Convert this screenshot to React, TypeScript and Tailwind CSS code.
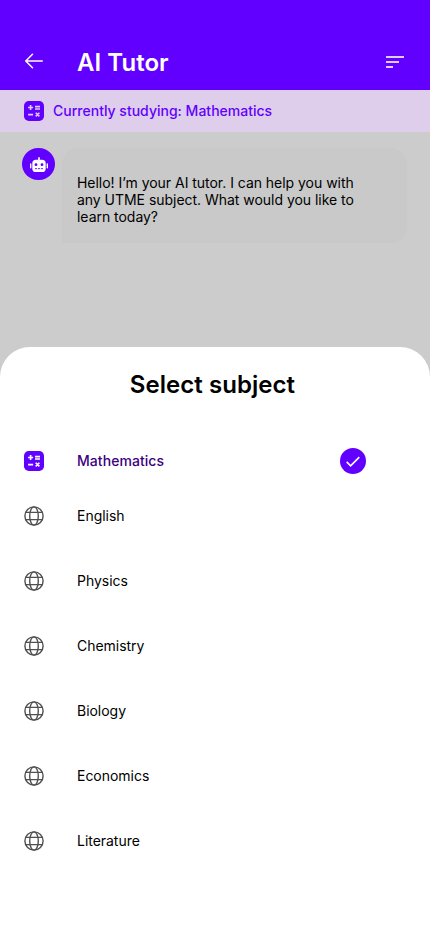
import React from "react";
import { PiArrowLeft } from "react-icons/pi";

const subjects = ["English", "Physics", "Chemistry", "Biology", "Economics", "Literature"];

function MathIcon({ cut }: { cut: string }) {
  return (
    <svg width="20" height="20" viewBox="0 0 20 20" className="shrink-0" fill="none">
      <rect width="20" height="20" rx="4.8" fill="#6200ff" />
      <path
        d="M4.1 6.5H9.1M6.6 4V9M11 5.6H16M11 8H16M4.1 13.6H9.1M11.7 11.7L15.4 15.4M15.4 11.7L11.7 15.4"
        stroke={cut}
        strokeWidth="1.6"
      />
    </svg>
  );
}

function RobotIcon() {
  return (
    <svg width="18" height="15" viewBox="0 0 18 15" fill="none">
      <rect x="8.2" width="1.6" height="4" rx="0.8" fill="white" />
      <rect x="2.3" y="2.8" width="13.4" height="12.2" rx="3.6" fill="white" />
      <rect y="6.3" width="1.4" height="5.2" rx="0.7" fill="white" />
      <rect x="16.6" y="6.3" width="1.4" height="5.2" rx="0.7" fill="white" />
      <circle cx="6" cy="7.7" r="1.4" fill="#6200ff" />
      <circle cx="12" cy="7.7" r="1.4" fill="#6200ff" />
      <path d="M5 11.7H7.2M8 11.7H10M10.8 11.7H13" stroke="#6200ff" strokeWidth="0.9" />
    </svg>
  );
}

function GlobeIcon() {
  return (
    <svg width="20" height="20" viewBox="0 0 20 20" className="shrink-0" fill="none" stroke="#505050" strokeWidth="1.4">
      <circle cx="10" cy="10" r="9.1" />
      <ellipse cx="10" cy="10" rx="4.3" ry="9.1" />
      <path d="M1.6 6.4H18.4M1.6 13.6H18.4" />
    </svg>
  );
}

export default function App() {
  return (
    <div className="flex h-[932px] w-[430px] flex-col overflow-hidden bg-[#cccccc] font-['Inter',sans-serif] text-black">
      <header className="flex h-[90px] shrink-0 items-end bg-[#6200ff] pl-[22px] pr-[26px] text-white">
        <PiArrowLeft size={24} className="mb-[17px] shrink-0" />
        <h1 className="mb-[11px] ml-[31px] flex-1 text-2xl leading-8 font-semibold tracking-[0.05px]">AI Tutor</h1>
        <svg width="18" height="12" viewBox="0 0 18 12" className="mb-[22px] shrink-0" fill="none">
          <path d="M0 1H18M0 6H13M0 11H7" stroke="#dfccff" strokeWidth="2" />
        </svg>
      </header>
      <div className="flex h-[42px] shrink-0 items-center gap-[9px] bg-[#dfcdec] pl-6 text-sm font-medium tracking-[0.01px] text-[#6200ff]">
        <MathIcon cut="#dfcdec" />
        <span>Currently studying: Mathematics</span>
      </div>
      <section className="flex h-[215px] shrink-0 items-start gap-[7px] pt-4 pl-[22px]">
        <div className="flex h-8 w-[33px] shrink-0 items-center justify-center rounded-full bg-[#6200ff]">
          <RobotIcon />
        </div>
        <div className="h-[95px] w-[345px] rounded-2xl rounded-bl-none bg-[#c9c9c9] pt-[26px] pl-[15px] text-sm leading-[17px] tracking-[-0.03px]">
          <p>
            Hello! I’m your AI tutor. I can help you with
            <br />
            any UTME subject. What would you like to
            <br />
            learn today?
          </p>
        </div>
      </section>
      <main className="flex flex-1 flex-col bg-[#cccccc]">
        <div className="flex flex-1 flex-col rounded-t-[30px] bg-white">
          <h2 className="h-[87px] pt-[22px] pr-[5px] text-center text-2xl leading-8 font-semibold tracking-[0.05px]">
            Select subject
          </h2>
          <div className="flex h-[54px] items-center pr-16 pl-6">
            <MathIcon cut="#ffffff" />
            <span className="ml-[33px] flex-1 text-sm font-medium tracking-[0.05px] text-[#3c0080]">Mathematics</span>
            <span className="flex size-[26px] items-center justify-center rounded-full bg-[#6200ff]">
              <svg width="14" height="11" viewBox="0 0 14 11" fill="none">
                <path d="M0.7 5.9L4.6 9.8L13.3 1.1" stroke="white" strokeWidth="1.6" />
              </svg>
            </span>
          </div>
          <ul className="-mt-[5px]">
            {subjects.map((name) => (
              <li key={name} className="flex h-[65px] items-center pl-6 text-sm tracking-[-0.03px]">
                <GlobeIcon />
                <span className="ml-[33px]">{name}</span>
              </li>
            ))}
          </ul>
        </div>
      </main>
    </div>
  );
}
